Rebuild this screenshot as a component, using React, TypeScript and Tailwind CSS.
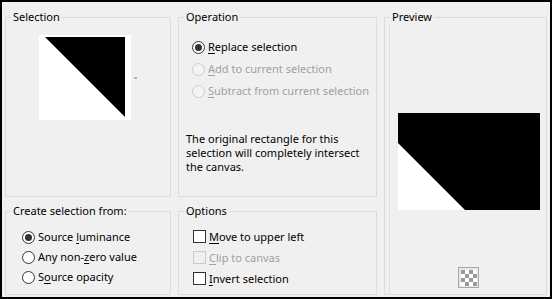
import type { ReactNode } from 'react'
import { clsx } from 'clsx'

const FONT = "font-['Noto_Sans','Lato',sans-serif] text-[11px] leading-[16px]"

function Group({ title, className, children }: { title: string; className?: string; children: ReactNode }) {
  return (
    <fieldset className={clsx('min-w-0 border border-[#dcdcdc]', className)}>
      <legend className="ml-[5px] px-[2px] text-black">{title}</legend>
      {children}
    </fieldset>
  )
}

function Radio({ checked, disabled }: { checked?: boolean; disabled?: boolean }) {
  return (
    <span
      className={clsx(
        'flex h-[13px] w-[13px] shrink-0 items-center justify-center rounded-full border',
        disabled ? 'border-[#cccccc] bg-[#f4f4f4]' : 'border-[#333333] bg-white',
      )}
    >
      {checked && <span className="h-[7px] w-[7px] rounded-full bg-[#333333]" />}
    </span>
  )
}

function Check({ disabled }: { disabled?: boolean }) {
  return (
    <span
      className={clsx(
        'h-[13px] w-[13px] shrink-0 border',
        disabled ? 'border-[#cccccc] bg-[#f0f0f0]' : 'border-[#333333] bg-white',
      )}
    />
  )
}

function Label({ pre = '', u, post, disabled }: { pre?: string; u: string; post: string; disabled?: boolean }) {
  return (
    <span className={clsx('whitespace-nowrap', disabled ? 'text-[#a0a0a0]' : 'text-black')}>
      {pre}
      <u className="underline-offset-[2px]">{u}</u>
      {post}
    </span>
  )
}

export default function App() {
  return (
    <div className={clsx('h-[299px] w-[552px] border-2 border-black bg-[#f0f0f0] px-[3px] pt-[7px]', FONT)}>
      <div className="grid grid-cols-[166px_199px_163px] grid-rows-[188px_92px] gap-x-[7px] gap-y-[6px]">
        <Group title="Selection">
          <div className="flex items-center pl-[33px] pt-[10px]">
            <svg width="92" height="85" viewBox="0 0 92 85">
              <rect width="92" height="85" fill="#fff" />
              <polygon points="6,2 86,2 86,82" fill="#000" />
            </svg>
            <span className="ml-[3px] h-[2px] w-[3px] bg-[#b8b8b8]" />
          </div>
        </Group>

        <Group title="Operation">
          <div className="flex flex-col pl-[13px] pt-[11px]">
            <div className="flex h-[22px] items-center gap-[3px]">
              <Radio checked />
              <Label u="R" post="eplace selection" />
            </div>
            <div className="flex h-[22px] items-center gap-[3px]">
              <Radio disabled />
              <Label u="A" post="dd to current selection" disabled />
            </div>
            <div className="flex h-[22px] items-center gap-[3px]">
              <Radio disabled />
              <Label u="S" post="ubtract from current selection" disabled />
            </div>
          </div>
          <p className="mt-[30px] pl-[7px] leading-[14px] text-black">
            The original rectangle for this
            <br />
            selection will completely intersect
            <br />
            the canvas.
          </p>
        </Group>

        <Group title="Preview" className="row-span-2 flex">
          <div className="ml-[4px] flex h-[270px] flex-col items-center border-l border-[#e2e2e2] pt-[88px]">
            <div className="flex w-[157px] justify-center">
              <svg width="142" height="97" viewBox="0 0 142 97">
                <rect width="142" height="97" fill="#000" />
                <polygon points="0,30 67,97 0,97" fill="#fff" />
              </svg>
            </div>
            <svg className="mt-[57px]" width="21" height="21" viewBox="0 0 21 21">
              <rect x="0.5" y="0.5" width="20" height="20" fill="#e8e8e8" stroke="#a8a8a8" />
              {[0, 1, 2, 3].flatMap((r) =>
                [0, 1, 2, 3].map((c) => (
                  <rect
                    key={`${r}-${c}`}
                    x={3 + c * 4}
                    y={3 + r * 4}
                    width="4"
                    height="4"
                    fill={(r + c) % 2 === 0 ? '#9a9a9a' : '#ffffff'}
                  />
                )),
              )}
            </svg>
          </div>
        </Group>

        <Group title="Create selection from:">
          <div className="flex flex-col pl-[16px] pt-[8px]">
            <div className="flex h-[20px] items-center gap-[3px]">
              <Radio checked />
              <Label pre="Source " u="l" post="uminance" />
            </div>
            <div className="flex h-[20px] items-center gap-[3px]">
              <Radio />
              <Label pre="Any non-" u="z" post="ero value" />
            </div>
            <div className="flex h-[20px] items-center gap-[3px]">
              <Radio />
              <Label pre="S" u="o" post="urce opacity" />
            </div>
          </div>
        </Group>

        <Group title="Options">
          <div className="flex flex-col pl-[14px] pt-[7px]">
            <div className="flex h-[21px] items-center gap-[3px]">
              <Check />
              <Label u="M" post="ove to upper left" />
            </div>
            <div className="flex h-[21px] items-center gap-[3px]">
              <Check disabled />
              <Label u="C" post="lip to canvas" disabled />
            </div>
            <div className="flex h-[21px] items-center gap-[3px]">
              <Check />
              <Label u="I" post="nvert selection" />
            </div>
          </div>
        </Group>
      </div>
    </div>
  )
}
